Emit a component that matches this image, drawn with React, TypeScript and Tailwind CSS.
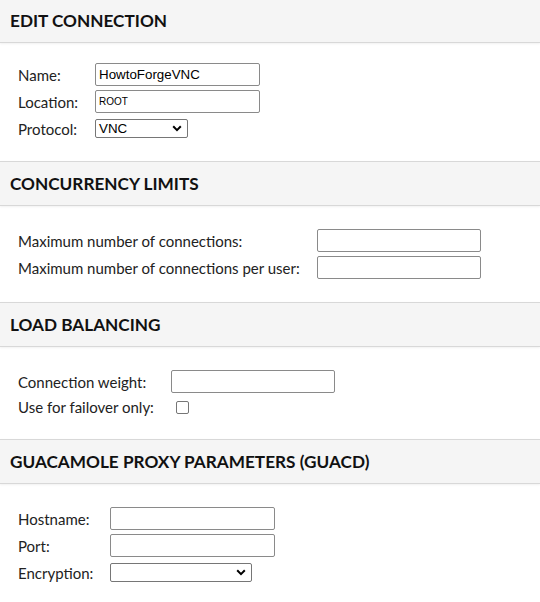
import type { ReactNode } from 'react'

const labelCls = "text-[15px] leading-5 text-[#222]"

function Section({ title, first, children, pad }: { title: string; first?: boolean; children: ReactNode; pad: string }) {
  return (
    <section>
      <div
        className={`flex items-center bg-[#f5f5f5] border-b border-[#d8d8d8] shadow-[0_1px_2px_rgba(0,0,0,0.06)] px-[10px] ${first ? 'h-[43px]' : 'h-[45px] border-t'}`}
      >
        <h2 className="text-[17.2px] font-bold text-[#111]">{title}</h2>
      </div>
      <div className={`grid grid-cols-[auto_1fr] gap-x-[17px] gap-y-1 items-center pl-[18px] ${pad}`}>{children}</div>
    </section>
  )
}

function TextInput({ w = 'w-[165px]', value, small }: { w?: string; value?: string; small?: boolean }) {
  return (
    <input
      readOnly
      value={value ?? ''}
      className={`${w} h-[23px] border border-[#8a8a8a] rounded-[2px] bg-white px-[3px] text-black outline-none ${small ? 'text-[10px]' : 'text-[13.33px]'}`}
      style={{ fontFamily: '"Liberation Sans", Arial, sans-serif' }}
    />
  )
}

function Select({ w, value }: { w: string; value?: string }) {
  return (
    <div
      className={`${w} h-[19px] border border-[#767676] rounded-[2px] bg-white flex items-center justify-between pl-[3px] pr-[5px] text-[13.33px] text-black`}
      style={{ fontFamily: '"Liberation Sans", Arial, sans-serif' }}
    >
      <span className="leading-none">{value}</span>
      <svg width="10" height="7" viewBox="0 0 10 7" fill="none">
        <path d="M1.2 1.3 5 5.1 8.8 1.3" stroke="#000" strokeWidth="2" />
      </svg>
    </div>
  )
}

export default function App() {
  return (
    <div className="w-[540px] h-[602px] overflow-hidden bg-white" style={{ fontFamily: 'Lato, "Open Sans", sans-serif' }}>
      <Section title="EDIT CONNECTION" first pad="pt-5 pb-[21px]">
        <span className={labelCls}>Name:</span>
        <TextInput value="HowtoForgeVNC" />
        <span className={labelCls}>Location:</span>
        <TextInput value="ROOT" small />
        <span className={labelCls}>Protocol:</span>
        <div className="h-[23px] flex items-center">
          <Select w="w-[93px]" value="VNC" />
        </div>
      </Section>

      <Section title="CONCURRENCY LIMITS" pad="py-[23px]">
        <span className={labelCls}>Maximum number of connections:</span>
        <TextInput w="w-[164px]" />
        <span className={labelCls}>Maximum number of connections per user:</span>
        <TextInput w="w-[164px]" />
      </Section>

      <Section title="LOAD BALANCING" pad="pt-[23px] pb-[22px]">
        <span className={labelCls}>Connection weight:</span>
        <TextInput w="w-[164px]" />
        <span className={labelCls}>Use for failover only:</span>
        <div className="h-5 flex items-center pl-[5px]">
          <span className="w-[13px] h-[13px] border border-[#767676] rounded-[2px] bg-white" />
        </div>
      </Section>

      <Section title="GUACAMOLE PROXY PARAMETERS (GUACD)" pad="pt-[23px] pb-[22px]">
        <span className={labelCls}>Hostname:</span>
        <TextInput />
        <span className={labelCls}>Port:</span>
        <TextInput />
        <span className={labelCls}>Encryption:</span>
        <div className="h-[23px] flex items-center">
          <Select w="w-[142px]" />
        </div>
      </Section>
    </div>
  )
}
